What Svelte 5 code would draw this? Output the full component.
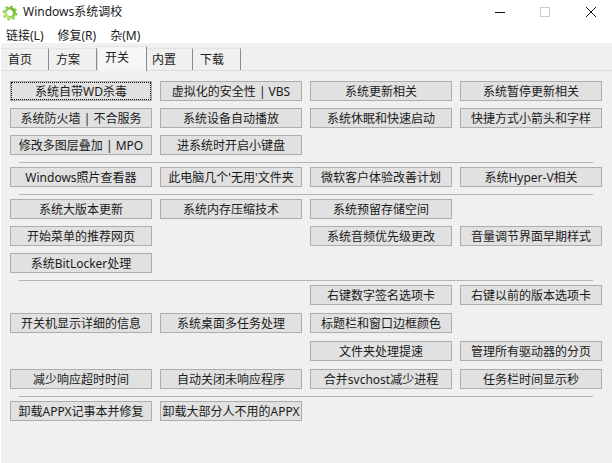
<script>
  const tabs = ['首页', '方案', '开关', '内置', '下载'];
  const groups = [
    [
      ['系统自带WD杀毒', '虚拟化的安全性 | VBS', '系统更新相关', '系统暂停更新相关'],
      ['系统防火墙 | 不合服务', '系统设备自动播放', '系统休眠和快速启动', '快捷方式小箭头和字样'],
      ['修改多图层叠加 | MPO', '进系统时开启小键盘', '', '']
    ],
    [['Windows照片查看器', '此电脑几个\'无用\'文件夹', '微软客户体验改善计划', '系统Hyper-V相关']],
    [
      ['系统大版本更新', '系统内存压缩技术', '系统预留存储空间', ''],
      ['开始菜单的推荐网页', '', '系统音频优先级更改', '音量调节界面早期样式'],
      ['系统BitLocker处理', '', '', '']
    ],
    [
      ['', '', '右键数字签名选项卡', '右键以前的版本选项卡'],
      ['开关机显示详细的信息', '系统桌面多任务处理', '标题栏和窗口边框颜色', ''],
      ['', '', '文件夹处理提速', '管理所有驱动器的分页'],
      ['减少响应超时时间', '自动关闭未响应程序', '合并svchost减少进程', '任务栏时间显示秒']
    ],
    [['卸载APPX记事本并修复', '卸载大部分人不用的APPX', '', '']]
  ];
</script>

<div class="window">
  <header class="titlebar">
    <svg class="logo" viewBox="0 0 16 16" aria-hidden="true">
      <defs>
        <linearGradient id="gear" x1="0" y1="1" x2="1" y2="0">
          <stop offset="0" stop-color="#c4e884" />
          <stop offset="0.6" stop-color="#8acb45" />
          <stop offset="1" stop-color="#5fae2e" />
        </linearGradient>
      </defs>
      <circle cx="8" cy="8" r="6.6" fill="none" stroke="#86c644" stroke-width="1.6" stroke-dasharray="2.6 2.6" />
      <circle cx="8" cy="8" r="4.4" fill="none" stroke="url(#gear)" stroke-width="3" />
      <path d="M5 9.500A3.400 3.400 0 0 1 9.500 5" fill="none" stroke="#eef9d8" stroke-width="0.8" />
    </svg>
    <span class="title">Windows系统调校</span>
    <div class="controls">
      <svg viewBox="0 0 46 20" aria-hidden="true"><path d="M21 10.500h10" stroke="#111" fill="none" /></svg>
      <svg viewBox="0 0 46 20" aria-hidden="true"><rect x="20.500" y="5.500" width="9" height="9" stroke="#ccc" fill="none" /></svg>
      <svg viewBox="0 0 46 20" aria-hidden="true"><path d="M20 5l10 10M30 5l-10 10" stroke="#111" fill="none" /></svg>
    </div>
  </header>
  <nav class="menu">
    <span>链接(L)</span><span>修复(R)</span><span>杂(M)</span>
  </nav>
  <main class="client">
    <div class="tabs">
      {#each tabs as tab, i}
        <div class="tab" class:active={i === 2}>{tab}</div>
      {/each}
    </div>
    <div class="page">
      {#each groups as rows, g}
        {#if g > 0}<hr />{/if}
        <div class="group" class:wide={g === 3}>
          {#each rows as row}
            {#each row as label}
              {#if label}
                <button class:focused={label === '系统自带WD杀毒'}>{label}</button>
              {:else}
                <span></span>
              {/if}
            {/each}
          {/each}
        </div>
      {/each}
    </div>
  </main>
</div>

<style>
  :global(body) {
    margin: 0;
    background: #f0f0f0;
  }
  .window {
    width: 612px;
    height: 463px;
    display: flex;
    flex-direction: column;
    overflow: hidden;
    background: #fff;
    font-family: "Noto Sans", "Noto Sans CJK SC", "Liberation Sans", sans-serif;
    font-size: 12px;
    color: #1a1a1a;
  }
  .titlebar {
    height: 24px;
    display: flex;
    align-items: center;
    padding-left: 2px;
    flex: none;
  }
  .logo {
    width: 16px;
    height: 16px;
    margin-top: 1px;
  }
  .title {
    margin: 0 0 2px 5px;
  }
  .controls {
    margin-left: auto;
    display: flex;
  }
  .controls svg {
    width: 46px;
    height: 20px;
    display: block;
  }
  .menu {
    height: 19px;
    display: flex;
    align-items: center;
    gap: 14px;
    padding: 3px 0 0 6px;
    box-sizing: border-box;
    flex: none;
  }
  .client {
    flex: 1;
    background: #f0f0f0;
    margin-left: 1px;
  }
  .tabs {
    display: flex;
    height: 28px;
    align-items: flex-end;
    border-bottom: 1px solid #dcdcdc;
    box-sizing: border-box;
  }
  .tab {
    width: 48px;
    height: 22px;
    padding-left: 7px;
    box-sizing: border-box;
    line-height: 21px;
    border-right: 1px solid #8c8c8c;
    border-top: 1px solid #e4e4e4;
  }
  .tab.active {
    width: 50px;
    height: 25px;
    margin: 0 -2px -1px 0;
    line-height: 21px;
    background: #f6f6f6;
    border-left: 1px solid #dcdcdc;
    position: relative;
  }
  .page {
    padding: 10px 9px 0 9px;
  }
  .group {
    display: grid;
    grid-template-columns: repeat(4, 142px);
    grid-auto-rows: 20px;
    gap: 7px 8px;
  }
  .group.wide {
    row-gap: 8px;
  }
  button {
    font: inherit;
    color: inherit;
    padding: 0;
    background: #e1e1e1;
    border: 1px solid #adadad;
    white-space: nowrap;
  }
  button.focused {
    outline: 1px dotted #111;
    outline-offset: -2px;
  }
  hr {
    margin: 7px 10px 4px 9px;
    border: 0;
    border-top: 1px solid #b4b4b4;
  }
</style>
